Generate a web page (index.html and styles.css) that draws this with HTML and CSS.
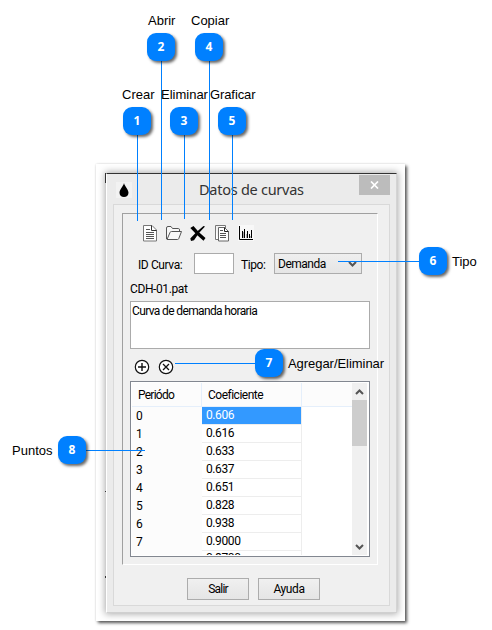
FILE: index.html
```html
<!DOCTYPE html>
<html lang="es">
<head>
<meta charset="utf-8">
<title>Datos de curvas</title>
<link rel="stylesheet" href="styles.css">
</head>
<body>
<main class="figure">
  <div class="sheet">
    <section class="window">
      <header class="titlebar">
        <svg class="drop" width="16" height="16" viewBox="0 0 16 16"><rect width="16" height="16" fill="#f2f2f2"/><path d="M8 1C7.500 4 3.500 7.500 3.500 10.700C3.500 13.400 5.500 15 8 15S12.500 13.400 12.500 10.700C12.500 7.500 8.500 4 8 1Z" fill="#000"/></svg>
        <h1 class="title">Datos de curvas</h1>
        <div class="close"><svg width="9" height="8" viewBox="0 0 9 8"><path d="M1 .5L8 7.500M8 .5L1 7.500" stroke="#fff" stroke-width="1.700"/></svg></div>
      </header>
      <div class="client">
        <div class="panel">
          <div class="toolbar">
            <svg width="16" height="17" viewBox="0 0 16 17"><path d="M1.500 .5H10L14.500 5V16H1.500Z" fill="#fff" stroke="#777"/><path d="M9.500 .5V5.500H14.500" fill="none" stroke="#333"/><path d="M4 4.500H8M4 7.500H12M4 9.500H12M4 11.500H12M4 13.500H12" stroke="#555"/></svg>
            <svg width="16" height="17" viewBox="0 0 16 17"><path d="M.5 14V3Q.5 1.500 2 1.500H5L6.500 3.500H12.500Q13.500 3.500 13.500 5V6.500" fill="#f8f8f8" stroke="#555"/><path d="M1 14.500L4 7.500Q4.300 6.500 5.500 6.500H15.500L12.800 13.500Q12.500 14.500 11.500 14.500Z" fill="#fafafa" stroke="#555"/></svg>
            <svg width="16" height="17" viewBox="0 0 16 17"><path d="M.3 3L3.500 1Q8 7 15.500 13L13.500 15.800Q6.500 10 .3 3Z"/><path d="M15 1.500Q9 7 4 15.300L1 16L.3 13.500Q7 6 13.500 1Z"/></svg>
            <svg width="16" height="17" viewBox="0 0 16 17"><path d="M1.500 .5H11.500V3M1.500 .5V14.500H4" fill="#fff" stroke="#777"/><path d="M4.500 2.500H10.500L14.500 6.500V16H4.500Z" fill="#fff" stroke="#666"/><path d="M10.500 2.500V6.500H14.500" fill="none" stroke="#222"/><path d="M6 5.500H9M6 8.500H12M6 10.500H12M6 12.500H12" stroke="#555"/></svg>
            <svg width="16" height="17" viewBox="0 0 16 17"><rect width="16" height="16" fill="#f8f8f8"/><path d="M1.500 1V14.500H15M4.500 6V13M6.500 4V13M9.500 6V13M11.500 9V13M13.500 5V13" fill="none" stroke="#000"/><path d="M5.500 7V13M8.500 9V13M12.500 11V13" stroke="#aaa"/></svg>
          </div>
          <div class="fields">
            <span class="id-label">ID Curva:</span><span class="id-input"></span>
            <span class="type-label">Tipo:</span>
            <span class="select"><span class="demand">Demanda</span><svg width="9" height="6" viewBox="0 0 9 6"><path d="M1 1L4.500 4.500L8 1" fill="none" stroke="#555" stroke-width="2"/></svg></span>
          </div>
          <div class="filename">CDH-01.pat</div>
          <div class="description">Curva de demanda horaria</div>
          <div class="row-actions">
            <svg width="16" height="16" viewBox="0 0 16 16"><circle cx="8" cy="8" r="6.700" fill="#fff" stroke="#111" stroke-width="1.200"/><path d="M4 8H12M8 4V12" stroke="#111" stroke-width="1.400"/></svg>
            <svg width="16" height="16" viewBox="0 0 16 16"><circle cx="8" cy="8" r="6.700" fill="#fff" stroke="#111" stroke-width="1.200"/><path d="M5 5L11 11M11 5L5 11" stroke="#111" stroke-width="1.300"/></svg>
          </div>
          <div class="grid">
            <div class="table">
              <div class="head"><span class="h-period">Periódo</span><span class="h-coef">Coeficiente</span></div>
              <div class="row"><span class="period">0</span><span class="coef selected">0.606</span></div>
              <div class="row"><span class="period">1</span><span class="coef">0.616</span></div>
              <div class="row"><span class="period">2</span><span class="coef">0.633</span></div>
              <div class="row"><span class="period">3</span><span class="coef">0.637</span></div>
              <div class="row"><span class="period">4</span><span class="coef">0.651</span></div>
              <div class="row"><span class="period">5</span><span class="coef">0.828</span></div>
              <div class="row"><span class="period">6</span><span class="coef">0.938</span></div>
              <div class="row"><span class="period">7</span><span class="coef">0.9000</span></div>
              <div class="row"><span class="period"></span><span class="coef partial">0.8700</span></div>
            </div>
            <div class="scrollbar">
              <svg width="9" height="6" viewBox="0 0 9 6"><path d="M1 5L4.500 1.500L8 5" fill="none" stroke="#555" stroke-width="2"/></svg>
              <div class="thumb"></div>
              <svg class="down" width="9" height="6" viewBox="0 0 9 6"><path d="M1 1L4.500 4.500L8 1" fill="none" stroke="#555" stroke-width="2"/></svg>
            </div>
          </div>
        </div>
        <div class="buttons"><div class="button salir">Salir</div><div class="button ayuda">Ayuda</div></div>
      </div>
    </section>
    <i class="edge corner"></i><i class="edge tick-a"></i><i class="edge tick-b"></i>
  </div>

  <i class="line v l1"></i><i class="line v l2"></i><i class="line v l3"></i><i class="line v l4"></i><i class="line v l5"></i>
  <i class="line l6"></i><i class="line l7"></i><i class="line l8"></i>
  <b class="badge b1">1</b><b class="badge b2">2</b><b class="badge b3">3</b><b class="badge b4">4</b>
  <b class="badge b5">5</b><b class="badge b6">6</b><b class="badge b7">7</b><b class="badge b8">8</b>
  <span class="label t1">Crear</span><span class="label t2">Abrir</span><span class="label t3">Eliminar</span><span class="label t4">Copiar</span>
  <span class="label t5">Graficar</span><span class="label t6">Tipo</span><span class="label t7">Agregar/Eliminar</span><span class="label t8">Puntos</span>
</main>
</body>
</html>
```
FILE: styles.css
```css
* { box-sizing: border-box; }
body { margin: 0; background: #fff; }
svg { display: block; flex: none; }
.figure { position: relative; width: 492px; height: 630px; overflow: hidden; padding: 164px 0 0 96px; font: 12px/14px Roboto, sans-serif; color: #000; white-space: nowrap; }
.sheet { position: relative; width: 309px; height: 457px; padding: 9px 8px 8px 10px; background: #fff; box-shadow: 2px 2px 3px #555, 0 0 2px #ddd; }
.window { width: 291px; height: 440px; background: #ebebeb; border-top: 1px solid #333; border-right: 1px solid #d4d4d4; border-bottom: 1px solid #d0d0d0; border-left: 1px solid #fff; box-shadow: 0 0 7px 1px #aaa; }
.titlebar { display: flex; height: 30px; padding-left: 9px; }
.drop { margin-top: 8px; }
.title { margin: 5px 0 0 67px; width: 106px; font: 14.500px/20px "Noto Sans", sans-serif; color: #333; letter-spacing: -.26px; }
.close { display: flex; align-items: center; justify-content: center; width: 31px; height: 20px; margin: 1px 0 0 54px; background: #bcbcbc; }
.client { width: 277px; height: 402px; margin-left: 6px; padding: 8px; background: #f0f0f0; border: 1px solid #d9d9d9; letter-spacing: -.4px; }
.panel { width: 256px; height: 352px; padding: 0 6px 0 7px; border: 1px solid #a0a0a0; border-right-color: #fff; border-bottom-color: #fff; }
.toolbar { display: flex; gap: 8px; height: 39px; padding: 11px 0 0 12px; }
.fields { display: flex; height: 29px; }
.id-label { width: 56px; margin: 5px 0 0 8px; }
.id-input { width: 40px; height: 21px; background: #fff; border: 1px solid #ababab; }
.type-label { width: 33px; margin: 5px 0 0 7px; }
.select { display: flex; align-items: center; justify-content: space-between; width: 88px; height: 21px; padding: 0 4px 0 3px; border: 1px solid #acacac; background: linear-gradient(#efefef, #e5e5e5); }
.demand { letter-spacing: -.5px; }
.filename { height: 19px; line-height: 14px; }
.description { width: 240px; height: 48px; padding: 2px 1px; background: #fff; border: 1px solid #ababab; letter-spacing: -.63px; }
.row-actions { display: flex; gap: 8px; height: 32px; padding: 10px 0 0 4px; }
.grid { display: flex; width: 240px; height: 176px; padding: 1px 2px 1px 1px; border: 1px solid #828790; background: #fff; }
.table { width: 220px; height: 172px; overflow: hidden; }
.head { display: flex; height: 24px; border-bottom: 1px solid #e5effb; background: #fcfcfc; line-height: 25px; }
.h-period { width: 70px; padding-left: 6px; border-right: 1px solid #e5effb; letter-spacing: -.75px; }
.h-coef { width: 100px; padding-left: 6px; border-right: 1px solid #e5effb; letter-spacing: -.5px; }
.row { display: flex; height: 18px; }
.period { width: 70px; padding-left: 4px; background: #fcfcfc; line-height: 18px; }
.coef { width: 100px; padding-left: 4px; border: solid #ededed; border-width: 0 1px 1px 0; line-height: 17px; }
.coef.selected { background: #3399ff; color: #fff; }
.coef.partial { line-height: 15px; }
.scrollbar { display: flex; flex-direction: column; align-items: center; width: 15px; height: 172px; padding-top: 6px; background: #f0f0f0; margin-left: auto; }
.thumb { width: 15px; height: 46px; margin-top: 5px; background: #cdcdcd; }
.down { margin: auto 0 5px; }
.buttons { display: flex; gap: 9px; padding: 13px 0 0 65px; }
.button { width: 62px; height: 22px; border: 1px solid #acacac; background: linear-gradient(#f0f0f0, #e5e5e5); text-align: center; line-height: 20px; }
.salir { letter-spacing: -.8px; }
.edge { position: absolute; left: 9px; width: 1px; background: #333; }
.corner { top: 9px; height: 10px; }
.tick-a { top: 327px; height: 1px; }
.tick-b { top: 412px; height: 2px; }
.line { position: absolute; height: 1px; background: #0080ff; }
.line.v { width: 1px; height: auto; }
.l1 { left: 137px; top: 135px; bottom: 409px; }
.l2 { left: 161px; top: 61px; bottom: 410px; }
.l3 { left: 184px; top: 135px; bottom: 411px; }
.l4 { left: 209px; top: 61px; bottom: 410px; }
.l5 { left: 232px; top: 135px; bottom: 410px; }
.l6 { left: 338px; top: 261px; width: 82px; }
.l7 { left: 175px; top: 363px; width: 82px; }
.l8 { left: 85px; top: 450px; width: 60px; }
.badge { position: absolute; width: 28px; height: 28px; border-radius: 9px; background: #0080ff; color: #fff; font: bold 12px/28px "Open Sans", sans-serif; text-align: center; box-shadow: 2px 2px 3px rgba(0,0,0,.6); }
.b1 { left: 123px; top: 107px; } .b2 { left: 147px; top: 33px; }
.b3 { left: 170px; top: 107px; } .b4 { left: 195px; top: 33px; }
.b5 { left: 218px; top: 107px; } .b6 { left: 419px; top: 247px; }
.b7 { left: 255px; top: 349px; } .b8 { left: 58px; top: 436px; }
.label { position: absolute; font: 13px/16px "Liberation Sans", Arial, sans-serif; }
.t1 { left: 122px; top: 87px; } .t2 { left: 148px; top: 13px; }
.t3 { left: 161px; top: 87px; } .t4 { left: 191px; top: 13px; }
.t5 { left: 210px; top: 87px; letter-spacing: -.1px; } .t6 { left: 452px; top: 254px; }
.t7 { left: 288px; top: 356px; letter-spacing: -.05px; } .t8 { left: 12px; top: 443px; }
```
